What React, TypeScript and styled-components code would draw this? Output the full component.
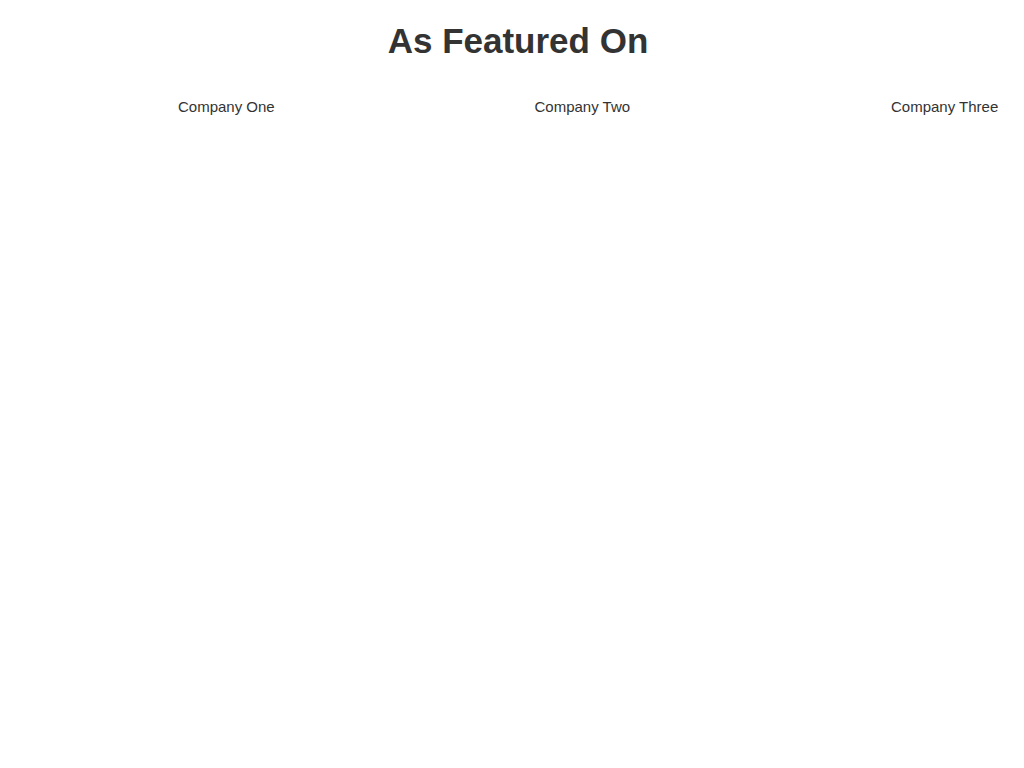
import React from "react";
import styled, { createGlobalStyle } from "styled-components";

const Global = createGlobalStyle`
  html, body { margin: 0; padding: 0; background: #fff; }
  body {
    font-family: "Liberation Sans", Helvetica, Arial, sans-serif;
    font-size: 14px;
    line-height: 20px;
    color: #333;
  }
`;

const Section = styled.section`
  display: flex;
  flex-direction: column;
`;

const Heading = styled.h1`
  margin: 22px 0 10px;
  font-size: 35px;
  line-height: 1.1;
  font-weight: 700;
  text-align: center;
  padding-left: 12px;
  color: #333;
`;

const Logos = styled.div`
  display: grid;
  grid-template-columns: 356.5px 356.5px 1fr;
  padding: 26px 0 0 178px;
`;

const Company = styled.div`
  font-size: 15px;
  line-height: 20px;
  color: #333;
  white-space: nowrap;
`;

const companies = ["Company One", "Company Two", "Company Three"];

export default function App() {
  return (
    <>
      <Global />
      <Section>
        <Heading>As Featured On</Heading>
        <Logos>
          {companies.map((c) => (
            <Company key={c}>{c}</Company>
          ))}
        </Logos>
      </Section>
    </>
  );
}
